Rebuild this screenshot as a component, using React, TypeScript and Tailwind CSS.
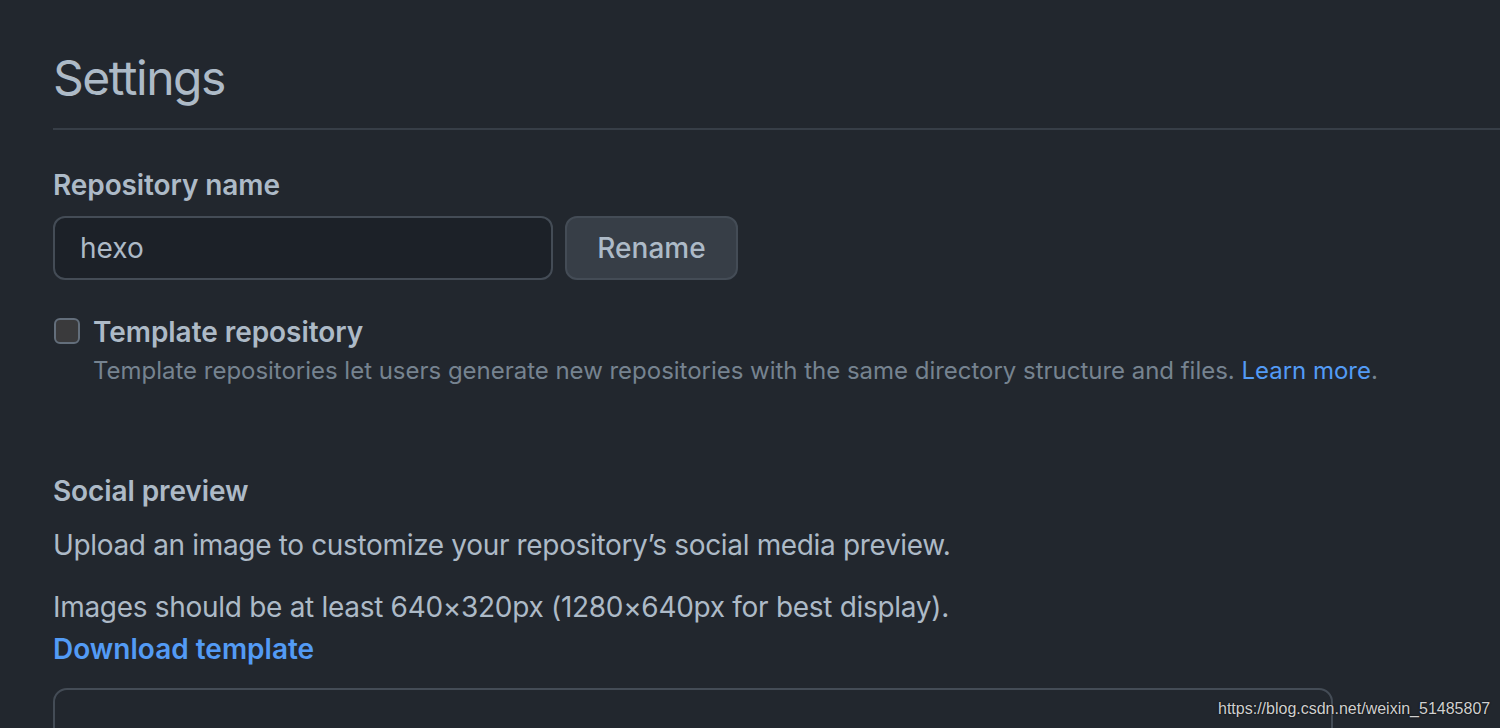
import { useState } from 'react';

const font = { fontFamily: 'Inter, "Noto Sans", sans-serif' };

export default function App() {
  const [isTemplate, setIsTemplate] = useState(false);

  return (
    <div className="relative h-[728px] w-full overflow-hidden bg-[#22272e] text-[#adbac7]" style={font}>
      <div className="pt-[48px] pl-[53px]">
        <h1 className="text-[48px] leading-[60px] font-normal tracking-[-1.5px]">Settings</h1>
        <div className="mt-[20px] h-[2px] bg-[#373e47]" />

        <div className="w-[1280px]">
          {/* repo name */}
          <label className="mt-[37px] block text-[28px] leading-[36px] font-semibold tracking-[-0.1px]">
            Repository name
          </label>
          <div className="mt-[13px] flex gap-[12px]">
            <input
              defaultValue="hexo"
              className="h-[64px] w-[500px] rounded-[12px] border-2 border-[#444c56] bg-[#1c2128] px-[25px] text-[28px] text-[#adbac7] outline-none"
            />
            <button className="h-[64px] w-[173px] rounded-[12px] border-2 border-[#444c56] bg-[#373e47] text-[28px] font-medium text-[#adbac7]">
              Rename
            </button>
          </div>

          {/* template checkbox */}
          <div className="mt-[37px] flex gap-[14px]">
            <button
              onClick={() => setIsTemplate(!isTemplate)}
              className="ml-[1px] mt-[1px] h-[26px] w-[26px] shrink-0 rounded-[6px] border-2 border-[#636e7b] bg-[#3a3a3c]"
            />
            <div className="-ml-[1px]">
              <div className="text-[28px] leading-[30px] font-semibold tracking-[-0.05px]">Template repository</div>
              <p className="mt-[8px] whitespace-nowrap text-[24px] leading-[32px] tracking-[-0.02px] text-[#768390]">
                Template repositories let users generate new repositories with the same directory structure and files.{' '}
                <a className="text-[#539bf5]">Learn more</a>.
              </p>
            </div>
          </div>

          {/* social preview */}
          <h2 className="mt-[86px] text-[28px] leading-[36px] font-semibold tracking-[-0.1px]">Social preview</h2>
          <p className="mt-[18px] text-[28px] leading-[36px] tracking-[-0.34px]">
            Upload an image to customize your repository’s social media preview.
          </p>
          <p className="mt-[26px] text-[28px] leading-[36px] tracking-[-0.3px]">
            Images should be at least 640×320px (1280×640px for best display).
          </p>
          <a className="block mt-[6px] text-[28px] leading-[36px] font-semibold text-[#539bf5]">Download template</a>

          <div className="mt-[21px] h-[200px] rounded-t-[14px] border-2 border-[#444c56]" />
        </div>
      </div>

      <div
        className="absolute left-[1218px] top-[699px] text-[16px] leading-[20px] text-[#d0d0d0]"
        style={{ fontFamily: '"Liberation Sans", Arial, sans-serif', textShadow: '0 0 2px #000' }}
      >
        https://blog.csdn.net/weixin_51485807
      </div>
    </div>
  );
}
